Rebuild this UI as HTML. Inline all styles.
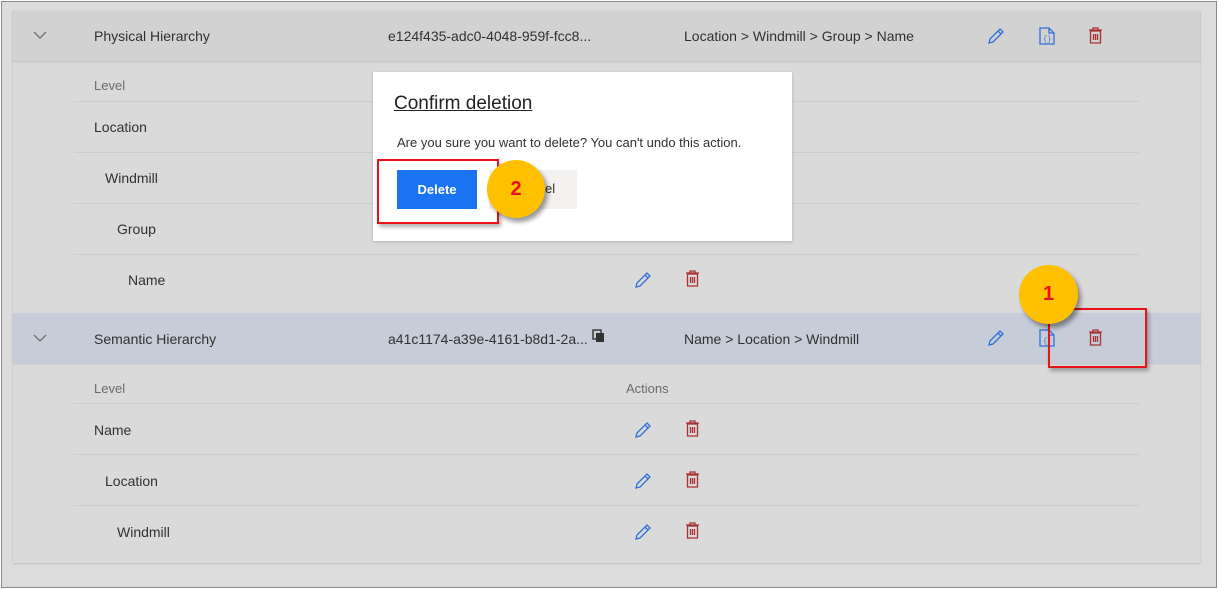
<!DOCTYPE html>
<html><head><meta charset="utf-8"><style>
*{margin:0;padding:0;box-sizing:border-box}
body{width:1219px;height:589px;background:#fff;font-family:"Segoe UI","Liberation Sans",sans-serif;font-size:14px;color:#323130;position:relative;overflow:hidden}
.frame{position:absolute;left:1px;top:1px;width:1216px;height:587px;border:1px solid #8a8a8a;background:#dcdcdc}
.panel{position:absolute;left:13px;top:11px;width:1187px;height:552px;background:#dadada;box-shadow:0 1px 2px rgba(0,0,0,.15)}
.hdr{position:absolute;left:13px;width:1187px;height:50px;box-shadow:0 1px 2px rgba(0,0,0,.12)}
.t{position:absolute;white-space:nowrap;line-height:18px}
.ln{position:absolute;left:74px;width:1065px;height:1px;background:#cdcdcd}
.g{color:#6b6b6b}
svg{position:absolute}
</style></head><body>
<div class="frame"></div>
<div class="panel"></div>
<div class="hdr" style="top:11px;background:#d2d2d2"></div>
<div class="hdr" style="top:313px;background:#c6ccd8"></div>

<svg style="left:33px;top:31px" width="14" height="9"><path d="M1 1l6 6 6-6" fill="none" stroke="#666" stroke-width="1.2"/></svg>
<svg style="left:33px;top:334px" width="14" height="9"><path d="M1 1l6 6 6-6" fill="none" stroke="#666" stroke-width="1.2"/></svg>

<div class="t" style="left:94px;top:27px">Physical Hierarchy</div>
<div class="t" style="left:388px;top:27px">e124f435-adc0-4048-959f-fcc8...</div>
<div class="t" style="left:684px;top:27px">Location &gt; Windmill &gt; Group &gt; Name</div>

<div class="t" style="left:94px;top:330px">Semantic Hierarchy</div>
<div class="t" style="left:388px;top:330px">a41c1174-a39e-4161-b8d1-2a...</div>
<svg style="left:592px;top:329px" width="13" height="14"><rect x="1" y="1" width="8" height="9" fill="none" stroke="#333" stroke-width="1.4"/><rect x="4" y="4" width="8" height="9" fill="#333"/></svg>
<div class="t" style="left:684px;top:330px">Name &gt; Location &gt; Windmill</div>

<svg style="left:987px;top:27px" width="18" height="18"><path d="M2 16l1-4L13 2l3 3L6 15z M11 4l3 3" fill="none" stroke="#2f6fd8" stroke-width="1.3"/></svg>
<svg style="left:1039px;top:27px" width="16" height="18"><path d="M1 1h9l5 5v11H1z M10 1v5h5" fill="none" stroke="#2f6fd8" stroke-width="1.3"/><text x="4" y="14" font-size="7" fill="#2f6fd8" font-family="Liberation Mono">{}</text></svg>
<svg style="left:1088px;top:27px" width="15" height="17"><path d="M1 3h13 M5 3V1h5v2 M2.5 4h10v12h-10z M5.5 7v6 M7.5 7v6 M9.5 7v6" fill="none" stroke="#a83232" stroke-width="1.3"/></svg>

<svg style="left:987px;top:329px" width="18" height="18"><path d="M2 16l1-4L13 2l3 3L6 15z M11 4l3 3" fill="none" stroke="#2f6fd8" stroke-width="1.3"/></svg>
<svg style="left:1039px;top:329px" width="16" height="18"><path d="M1 1h9l5 5v11H1z M10 1v5h5" fill="none" stroke="#2f6fd8" stroke-width="1.3"/><text x="4" y="14" font-size="7" fill="#2f6fd8" font-family="Liberation Mono">{}</text></svg>
<svg style="left:1088px;top:329px" width="15" height="17"><path d="M1 3h13 M5 3V1h5v2 M2.5 4h10v12h-10z M5.5 7v6 M7.5 7v6 M9.5 7v6" fill="none" stroke="#a83232" stroke-width="1.3"/></svg>

<div class="t g" style="left:94px;top:77px;font-size:13px">Level</div>
<div class="ln" style="top:101px"></div>
<div class="t" style="left:94px;top:118px">Location</div>
<div class="ln" style="top:152px"></div>
<div class="t" style="left:105px;top:169px">Windmill</div>
<div class="ln" style="top:203px"></div>
<div class="t" style="left:117px;top:220px">Group</div>
<div class="ln" style="top:254px"></div>
<div class="t" style="left:128px;top:271px">Name</div>
<svg style="left:634px;top:271px" width="18" height="18"><path d="M2 16l1-4L13 2l3 3L6 15z M11 4l3 3" fill="none" stroke="#2f6fd8" stroke-width="1.3"/></svg>
<svg style="left:685px;top:270px" width="15" height="17"><path d="M1 3h13 M5 3V1h5v2 M2.5 4h10v12h-10z M5.5 7v6 M7.5 7v6 M9.5 7v6" fill="none" stroke="#a83232" stroke-width="1.3"/></svg>

<div class="t g" style="left:94px;top:380px;font-size:13px">Level</div>
<div class="t g" style="left:626px;top:380px;font-size:13px">Actions</div>
<div class="ln" style="top:403px"></div>
<div class="t" style="left:94px;top:421px">Name</div>
<div class="ln" style="top:454px"></div>
<div class="t" style="left:105px;top:472px">Location</div>
<div class="ln" style="top:505px"></div>
<div class="t" style="left:117px;top:523px">Windmill</div>
<svg style="left:634px;top:421px" width="18" height="18"><path d="M2 16l1-4L13 2l3 3L6 15z M11 4l3 3" fill="none" stroke="#2f6fd8" stroke-width="1.3"/></svg>
<svg style="left:685px;top:420px" width="15" height="17"><path d="M1 3h13 M5 3V1h5v2 M2.5 4h10v12h-10z M5.5 7v6 M7.5 7v6 M9.5 7v6" fill="none" stroke="#a83232" stroke-width="1.3"/></svg>
<svg style="left:634px;top:472px" width="18" height="18"><path d="M2 16l1-4L13 2l3 3L6 15z M11 4l3 3" fill="none" stroke="#2f6fd8" stroke-width="1.3"/></svg>
<svg style="left:685px;top:471px" width="15" height="17"><path d="M1 3h13 M5 3V1h5v2 M2.5 4h10v12h-10z M5.5 7v6 M7.5 7v6 M9.5 7v6" fill="none" stroke="#a83232" stroke-width="1.3"/></svg>
<svg style="left:634px;top:523px" width="18" height="18"><path d="M2 16l1-4L13 2l3 3L6 15z M11 4l3 3" fill="none" stroke="#2f6fd8" stroke-width="1.3"/></svg>
<svg style="left:685px;top:522px" width="15" height="17"><path d="M1 3h13 M5 3V1h5v2 M2.5 4h10v12h-10z M5.5 7v6 M7.5 7v6 M9.5 7v6" fill="none" stroke="#a83232" stroke-width="1.3"/></svg>

<div style="position:absolute;left:373px;top:72px;width:419px;height:169px;background:#fff;box-shadow:0 1px 3px rgba(0,0,0,.2)"></div>
<div class="t" style="left:394px;top:92px;font-size:19px;line-height:24px;text-decoration:underline;color:#222">Confirm deletion</div>
<div class="t" style="left:397px;top:134px;font-size:13px;color:#323130">Are you sure you want to delete? You can't undo this action.</div>
<div style="position:absolute;left:489px;top:170px;width:88px;height:39px;background:#f3f2f1"></div>
<div class="t" style="left:545px;top:180px;font-size:13px">el</div>
<div style="position:absolute;left:397px;top:170px;width:80px;height:39px;background:#1a73f0;color:#fff;font-size:13px;font-weight:600;text-align:center;line-height:39px">Delete</div>
<div style="position:absolute;left:377px;top:159px;width:122px;height:65px;border:2px solid #e8121a;box-shadow:2px 3px 4px rgba(0,0,0,.3)"></div>
<div style="position:absolute;left:487px;top:160px;width:58px;height:58px;border-radius:50%;background:#ffc000;box-shadow:3px 4px 5px rgba(0,0,0,.4);color:#e8121a;font-weight:bold;font-size:20px;text-align:center;line-height:58px;font-family:'Liberation Sans',sans-serif">2</div>

<div style="position:absolute;left:1048px;top:308px;width:99px;height:60px;border:2px solid #e8121a;box-shadow:2px 3px 4px rgba(0,0,0,.3)"></div>
<div style="position:absolute;left:1019px;top:265px;width:59px;height:59px;border-radius:50%;background:#ffc000;box-shadow:3px 4px 5px rgba(0,0,0,.4);color:#e8121a;font-weight:bold;font-size:20px;text-align:center;line-height:59px;font-family:'Liberation Sans',sans-serif">1</div>
</body></html>
